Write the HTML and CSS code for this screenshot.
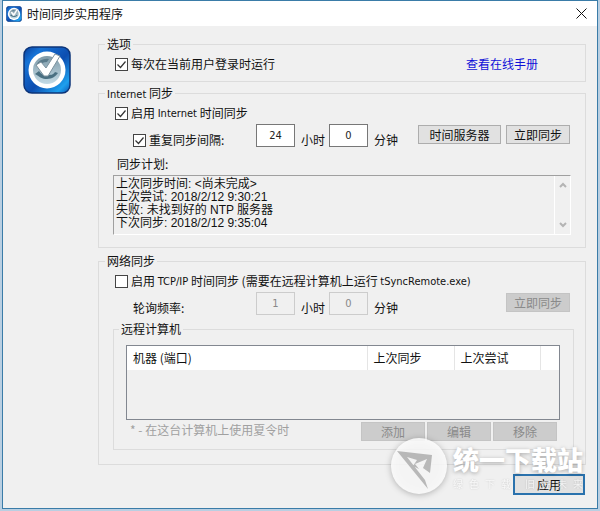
FILE: index.html
```html
<!DOCTYPE html>
<html lang="zh-CN">
<head>
    <meta charset="UTF-8">
    <meta name="viewport" content="width=device-width, initial-scale=1.0">
    <title>时间同步实用程序</title>
    <link rel="stylesheet" href="styles.css">
</head>
<body>

<!-- Shared clock icon -->
<svg class="defs" width="0" height="0" aria-hidden="true">
    <defs>
        <linearGradient id="blue" x1="0" y1="0" x2="1" y2="1">
            <stop offset="0" stop-color="#0a3f9c"/>
            <stop offset="0.2" stop-color="#1673d6"/>
            <stop offset="0.55" stop-color="#0d4db0"/>
            <stop offset="0.85" stop-color="#1ea0ee"/>
            <stop offset="1" stop-color="#0b55b4"/>
        </linearGradient>
        <linearGradient id="dial" x1="0" y1="0" x2="0" y2="1">
            <stop offset="0" stop-color="#7f9aa8"/>
            <stop offset="1" stop-color="#c3dbe6"/>
        </linearGradient>
        <symbol id="clock" viewBox="0 0 48 48">
            <rect x="1" y="1" width="46" height="46" rx="8" fill="url(#blue)" stroke="#0c3478" stroke-width="1.5"/>
            <circle cx="24" cy="24" r="18.5" fill="#fff"/>
            <circle cx="24" cy="24" r="14" fill="url(#dial)"/>
            <path d="M12 28c5 3 7 5 12 5s9-3 11-6l-3-1c-2 3-4 3-8 3s-6-1-8-4z" fill="#4a7082"/>
            <path d="M13 19c3-5 8-7 13-6l-2 3c-4 0-6 1-8 4z" fill="#5a7a8a"/>
            <path d="M13 19l5-3 5 6 9-14 5 2-12 20h-4z" fill="#fff" stroke="#7d929e" stroke-width="1"/>
        </symbol>
    </defs>
</svg>

<div class="window">
    <div class="titlebar">
        <svg class="title-icon"><use href="#clock"/></svg>
        <h1>时间同步实用程序</h1>
        <button class="close" aria-label="关闭">
            <svg viewBox="0 0 11 11"><path d="M0.5 0.5l10 10M10.5 0.5l-10 10"/></svg>
        </button>
    </div>

    <div class="content">
        <svg class="logo"><use href="#clock"/></svg>

        <div class="main">
            <fieldset class="group options">
                <legend>选项</legend>
                <div class="row">
                    <label><input type="checkbox" checked>每次在当前用户登录时运行</label>
                    <a href="#" class="manual">查看在线手册</a>
                </div>
            </fieldset>

            <fieldset class="group internet">
                <legend><span class="en">Internet</span> 同步</legend>
                <div class="row">
                    <label><input type="checkbox" checked>启用 <span class="en">Internet</span> 时间同步</label>
                </div>
                <div class="row interval">
                    <label class="first"><input type="checkbox" checked>重复同步间隔:</label>
                    <input type="text" class="num" id="sync-hours" value="24">
                    <label class="unit" for="sync-hours">小时</label>
                    <input type="text" class="num" id="sync-minutes" value="0">
                    <label class="unit" for="sync-minutes">分钟</label>
                    <div class="buttons">
                        <button class="wide">时间服务器</button>
                        <button>立即同步</button>
                    </div>
                </div>
                <label class="log-label" for="log">同步计划:</label>
                <div class="log-box">
                    <textarea id="log" readonly>上次同步时间: &lt;尚未完成&gt;
上次尝试: 2018/2/12 9:30:21
失败: 未找到好的 NTP 服务器
下次同步: 2018/2/12 9:35:04</textarea>
                    <div class="scroll">
                        <svg viewBox="0 0 8 6"><path d="M1 5l3-3 3 3"/></svg>
                        <svg viewBox="0 0 8 6"><path d="M1 1l3 3 3-3"/></svg>
                    </div>
                </div>
            </fieldset>

            <fieldset class="group network">
                <legend>网络同步</legend>
                <div class="row">
                    <label><input type="checkbox">启用 <span class="en">TCP/IP</span> 时间同步 (需要在远程计算机上运行 <span class="en">tSyncRemote.exe)</span></label>
                </div>
                <div class="row interval">
                    <label class="first" for="poll-hours">轮询频率:</label>
                    <input type="text" class="num" id="poll-hours" value="1" disabled>
                    <label class="unit" for="poll-hours">小时</label>
                    <input type="text" class="num" id="poll-minutes" value="0" disabled>
                    <label class="unit" for="poll-minutes">分钟</label>
                    <div class="buttons">
                        <button disabled>立即同步</button>
                    </div>
                </div>

                <fieldset class="group remote">
                    <legend>远程计算机</legend>
                    <div class="list">
                        <table>
                            <thead>
                                <tr>
                                    <th>机器 (端口)</th>
                                    <th class="sync">上次同步</th>
                                    <th class="try">上次尝试</th>
                                    <th class="rest"></th>
                                </tr>
                            </thead>
                        </table>
                    </div>
                    <div class="list-footer">
                        <span class="note">* - 在这台计算机上使用夏令时</span>
                        <div class="buttons">
                            <button disabled>添加</button>
                            <button disabled>编辑</button>
                            <button disabled>移除</button>
                        </div>
                    </div>
                </fieldset>
            </fieldset>

            <div class="actions">
                <button class="apply">应用</button>
            </div>
        </div>
    </div>

    <!-- Site watermark over the corner of the window -->
    <div class="watermark">
        <svg viewBox="0 0 56 56">
            <circle cx="28" cy="28" r="28" fill="#fff" fill-opacity="0.85"/>
            <path d="M6 13L41 17L39 35L32 30L36 21L24 26L28 31L22 28L26 22L16 19L34 42L37 51Z" fill="#b8b8b8"/>
        </svg>
        <div>
            <div class="mark-name">统一下载站</div>
            <div class="mark-slogan">绿色下载 旧在未来</div>
        </div>
    </div>
</div>

</body>
</html>
```
FILE: styles.css
```css
* {
    box-sizing: border-box;
}
body {
    margin: 0;
    padding: 0 2px 2px;
    min-height: 100vh;
    display: flex;
    background-color: #b9cfe2;
    font-family: "Noto Sans CJK SC", sans-serif;
    font-size: 12px;
    line-height: 16px;
    color: #111;
}
.defs {
    position: absolute;
}
.window {
    position: relative;
    flex: 1;
    background-color: #f0f0f0;
    border: 1px solid #3a7ca8;
}
.en {
    font-family: "DejaVu Sans Condensed", "Noto Sans", sans-serif;
    font-size: 11px;
    line-height: 1;
}
/* Title bar */
.titlebar {
    display: flex;
    align-items: center;
    height: 25px;
    padding: 0 10px 0 3px;
    background-color: #fff;
}
.title-icon {
    width: 16px;
    height: 16px;
}
.titlebar h1 {
    flex: 1;
    margin: 0 0 0 5px;
    font-size: 12px;
    font-weight: normal;
}
.close {
    width: 11px;
    height: 11px;
    min-width: 0;
    padding: 0;
    border: none;
    background: none;
    display: flex;
}
.close svg {
    width: 11px;
    height: 11px;
    stroke: #111;
    fill: none;
}
/* Content */
.content {
    display: flex;
    gap: 27px;
    padding: 10px 11px 0 20px;
}
.logo {
    flex: none;
    width: 48px;
    height: 48px;
    margin-top: 10px;
}
.main {
    flex: 1;
    min-width: 0;
}
.group {
    min-width: 0;
    margin: 0;
    padding: 4px 11px 0 14px;
    border: 1px solid #dcdcdc;
}
.group legend {
    margin-left: -8px;
    padding: 0 2px;
}
.options {
    padding-bottom: 9px;
    margin-bottom: 3px;
}
.internet {
    padding-bottom: 12px;
    margin-bottom: 5px;
}
.network {
    padding-bottom: 14px;
}
.row {
    display: flex;
    align-items: center;
    padding: 0 4px 0 2px;
}
.row label {
    display: flex;
    align-items: center;
    white-space: pre;
}
input[type="checkbox"] {
    appearance: none;
    width: 13px;
    height: 13px;
    margin: 0 3px 0 0;
    border: 1px solid #444;
    background-color: #fff;
}
input[type="checkbox"]:checked {
    background-image: url("data:image/svg+xml,%3Csvg xmlns='http://www.w3.org/2000/svg' viewBox='0 0 11 11'%3E%3Cpath d='M1.5 5.5l3 3 5-6' fill='none' stroke='%23333' stroke-width='1.2'/%3E%3C/svg%3E");
}
.manual {
    margin-left: auto;
    margin-right: 32px;
    color: #1010d8;
    text-decoration: none;
}
/* Interval rows */
.interval {
    align-items: flex-end;
    margin-top: 3px;
}
.interval .first {
    width: 123px;
    padding-left: 18px;
}
.num {
    width: 39px;
    height: 23px;
    margin-bottom: 1px;
    padding: 0;
    border: 1px solid #777;
    background-color: #fff;
    font-family: "DejaVu Sans Condensed", "Noto Sans", sans-serif;
    font-size: 11px;
    text-align: center;
    color: #222;
}
.num:disabled {
    border-color: #ccc;
    background-color: #f0f0f0;
    color: #888;
}
.interval .first + .num {
    margin-left: 18px;
}
.unit {
    width: 34px;
    padding-left: 6px;
}
button {
    min-width: 64px;
    height: 19px;
    padding: 0;
    border: 1px solid #adadad;
    background-color: #e1e1e1;
    font-family: inherit;
    font-size: 12px;
    line-height: 16px;
    color: #111;
}
button:disabled {
    border-color: #c4c4c4;
    background-color: #cccccc;
    color: #8a8a8a;
}
.buttons {
    display: flex;
    gap: 5px;
}
.interval .buttons {
    align-self: flex-start;
    margin: 1px 0 0 auto;
}
.wide {
    width: 83px;
}
/* Log */
.log-label {
    display: block;
    margin: 8px 0 3px 4px;
}
.log-box {
    display: flex;
    height: 60px;
    margin-right: 3px;
    border: 1px solid #fff;
    border-top-color: #a0a0a0;
    border-left-color: #a0a0a0;
}
.log-box textarea {
    flex: 1;
    padding: 2px 2px 0;
    border: none;
    outline: none;
    resize: none;
    overflow: hidden;
    background: none;
    font-family: "Liberation Sans", "Noto Sans CJK SC", sans-serif;
    font-size: 12px;
    line-height: 13px;
    color: #111;
}
.scroll {
    display: flex;
    flex-direction: column;
    justify-content: space-between;
    align-items: center;
    width: 16px;
    padding: 6px 0;
    border-left: 1px solid #fff;
}
.scroll svg {
    width: 8px;
    height: 6px;
    fill: none;
    stroke: #b4b4b4;
    stroke-width: 2;
}
/* Remote computers */
.remote {
    margin-top: 5px;
    padding: 8px 13px 8px 12px;
}
.remote legend {
    margin-left: -7px;
}
.list {
    height: 75px;
    border: 1px solid #828790;
}
.list table {
    width: 100%;
    table-layout: fixed;
    border-collapse: collapse;
}
.list th {
    height: 24px;
    padding: 0 6px;
    border-right: 1px solid #e5e5e5;
    background-color: #fff;
    font-weight: normal;
    text-align: left;
}
.list .sync {
    width: 87px;
}
.list .try {
    width: 86px;
}
.list .rest {
    width: 19px;
    border-right: none;
}
.list-footer {
    display: flex;
    justify-content: space-between;
    padding: 2px 3px 0 4px;
}
.list-footer .buttons {
    gap: 2px;
}
.note {
    color: #a0a0a0;
}
.actions {
    display: flex;
    justify-content: flex-end;
    padding: 9px 1px 0 0;
}
.apply {
    width: 72px;
    height: 21px;
    border: 2px solid #2a72ad;
}
/* Watermark */
.watermark {
    position: absolute;
    right: 14px;
    bottom: 14px;
    display: flex;
    gap: 6px;
    pointer-events: none;
    color: #fff;
}
.watermark svg {
    width: 56px;
    height: 56px;
    filter: drop-shadow(0 1px 3px rgba(0, 0, 0, 0.3));
}
.mark-name {
    margin-top: 8px;
    font-size: 26px;
    font-weight: 900;
    line-height: 26px;
    text-shadow: 0 1px 4px rgba(0, 0, 0, 0.3);
}
.mark-slogan {
    margin-top: 5px;
    font-size: 10px;
    line-height: 14px;
    opacity: 0.6;
    text-align: left;
    text-align-last: justify;
    text-justify: inter-character;
    text-shadow: 0 0 2px rgba(0, 0, 0, 0.3);
}
```
